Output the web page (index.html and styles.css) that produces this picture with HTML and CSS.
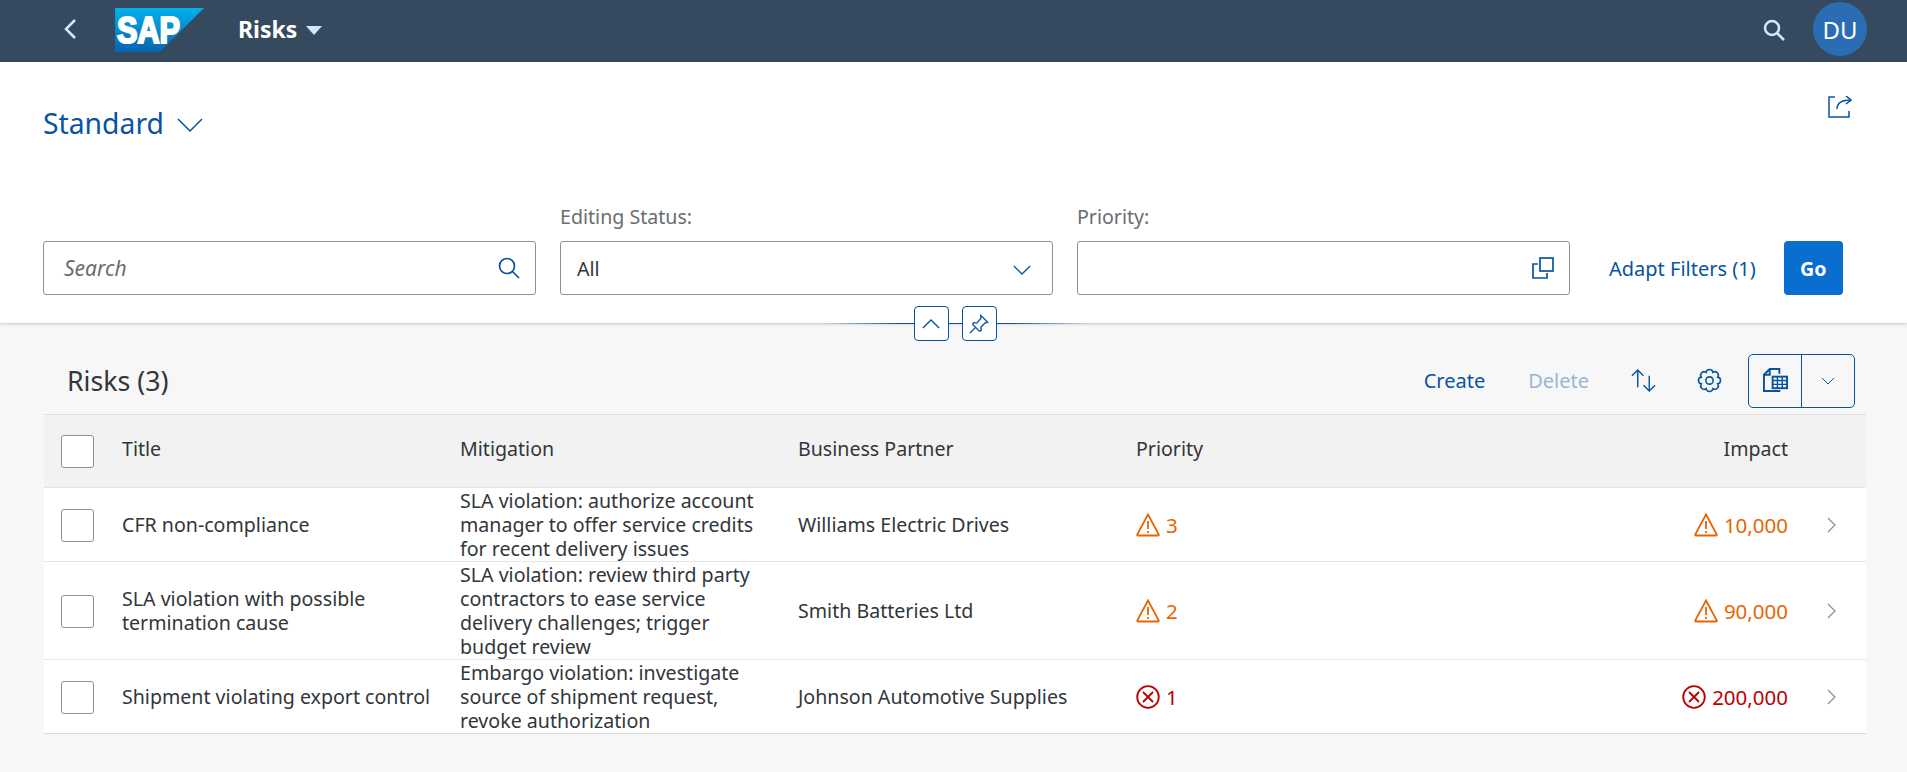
FILE: index.html
```html
<!DOCTYPE html>
<html lang="en">
<head>
    <meta charset="UTF-8">
    <meta name="viewport" content="width=device-width, initial-scale=1.0">
    <title>Risks</title>
    <link rel="stylesheet" href="styles.css">
</head>
<body>
    <header class="shell-bar">
        <svg class="back-icon" viewBox="0 0 14 22"><path d="M12 2 3 11l9 9"/></svg>
        <svg class="sap-logo" viewBox="0 0 89 44">
            <defs>
                <linearGradient id="sapBlue" x1="0" y1="0" x2="0" y2="1">
                    <stop offset="0" stop-color="#00b1eb"/>
                    <stop offset="1" stop-color="#0a63b0"/>
                </linearGradient>
            </defs>
            <polygon points="0,0 89,0 45,44 0,44" fill="url(#sapBlue)"/>
            <text x="2" y="35" class="sap-logo-text" textLength="63" lengthAdjust="spacingAndGlyphs">SAP</text>
        </svg>
        <div class="app-title">
            <span>Risks</span>
            <span class="title-caret"></span>
        </div>
        <div class="shell-actions">
            <svg class="shell-search" viewBox="0 0 22 22"><circle cx="9" cy="9" r="7"/><path d="m14 14 7 7"/></svg>
            <div class="avatar">DU</div>
        </div>
    </header>

    <section class="page-header">
        <div class="variant-row">
            <div class="variant-title">
                <span>Standard</span>
                <svg class="variant-chevron" viewBox="0 0 26 14"><path d="m1 1 12 12L25 1"/></svg>
            </div>
            <svg class="share-icon" viewBox="0 0 24 22">
                <path d="M7 1H1v20h20v-6"/>
                <path d="M9 13c0-6 5-9 14-9"/>
                <path d="m18 0 5 4-5 4"/>
            </svg>
        </div>

        <div class="filter-bar">
            <div class="filter-item">
                <div class="filter-input search-input">
                    <span class="placeholder">Search</span>
                    <svg class="input-icon" viewBox="0 0 22 22"><circle cx="9" cy="9" r="7.5"/><path d="m14.500 14.500 6.500 6.500"/></svg>
                </div>
            </div>
            <div class="filter-item">
                <label class="filter-label">Editing Status:</label>
                <div class="filter-input">
                    <span>All</span>
                    <svg class="input-chevron" viewBox="0 0 20 12"><path d="m1 1 9 9 9-9"/></svg>
                </div>
            </div>
            <div class="filter-item">
                <label class="filter-label">Priority:</label>
                <div class="filter-input">
                    <span></span>
                    <svg class="input-icon" viewBox="0 0 22 22">
                        <path d="M6 7H1v14h14v-5"/>
                        <rect x="8" y="1" width="13" height="13"/>
                    </svg>
                </div>
            </div>
            <a class="adapt-link">Adapt Filters (1)</a>
            <button class="go-button">Go</button>
        </div>

        <div class="collapse-line">
            <button class="line-button">
                <svg viewBox="0 0 20 12"><path d="m1 11 9-9 9 9"/></svg>
            </button>
            <button class="line-button">
                <svg class="pin-icon" viewBox="0 0 22 22">
                    <path d="M13 1.500 20.500 9l-3 1-4.500 4.500.5 3.500-2 1-7.500-7.500 1-2 3.500.5L13 5z"/>
                    <path d="m1 21 6-6"/>
                </svg>
            </button>
        </div>
    </section>

    <main class="content">
        <div class="table-toolbar">
            <h2 class="table-title">Risks (3)</h2>
            <div class="toolbar-actions">
                <a class="toolbar-link">Create</a>
                <a class="toolbar-link is-disabled">Delete</a>
                <svg class="toolbar-icon sort-icon" viewBox="0 0 26 24">
                    <path d="M7 19V1"/><path d="m1 7 6-6 6 6"/>
                    <path d="M19 7v16"/><path d="m13 17 6 6 6-6"/>
                </svg>
                <svg class="toolbar-icon gear-icon" viewBox="0 0 24 24">
                    <path d="M19.850 15.250A3.300 3.300 0 0 1 15.250 19.850A3.300 3.300 0 0 1 8.750 19.850A3.300 3.300 0 0 1 4.150 15.250A3.300 3.300 0 0 1 4.150 8.750A3.300 3.300 0 0 1 8.750 4.150A3.300 3.300 0 0 1 15.250 4.150A3.300 3.300 0 0 1 19.850 8.750A3.300 3.300 0 0 1 19.850 15.250Z"/>
                    <circle cx="12" cy="12" r="3.500"/>
                </svg>
                <div class="export-button">
                    <span class="export-main">
                        <svg class="export-icon" viewBox="0 0 26 26">
                            <path d="M17 6V1H7L1 7v17h17"/>
                            <path d="M7 1v6H1"/>
                            <rect class="export-sheet" x="10" y="9" width="15" height="12"/>
                            <path class="export-grid" d="M10 13h15M10 17h15M15 9v12M20 9v12"/>
                        </svg>
                    </span>
                    <span class="export-arrow">
                        <svg viewBox="0 0 14 8"><path d="m1 1 6 6 6-6"/></svg>
                    </span>
                </div>
            </div>
        </div>

        <table class="risk-table">
            <thead>
                <tr>
                    <th class="col-select"><span class="checkbox"></span></th>
                    <th><span class="head-text">Title</span></th>
                    <th><span class="head-text">Mitigation</span></th>
                    <th><span class="head-text">Business Partner</span></th>
                    <th class="col-priority"><span class="head-text">Priority</span></th>
                    <th class="col-impact"><span class="head-text">Impact</span></th>
                    <th class="col-nav"></th>
                </tr>
            </thead>
            <tbody>
                <tr>
                    <td class="col-select"><span class="checkbox"></span></td>
                    <td>CFR non-compliance</td>
                    <td>SLA violation: authorize account manager to offer service credits for recent delivery issues</td>
                    <td>Williams Electric Drives</td>
                    <td class="col-priority"><span class="status is-warning"><svg class="status-icon" viewBox="0 0 24 24"><use href="#warnIcon"/></svg>3</span></td>
                    <td class="col-impact"><span class="status is-warning"><svg class="status-icon" viewBox="0 0 24 24"><use href="#warnIcon"/></svg>10,000</span></td>
                    <td class="col-nav"><svg class="nav-chevron" viewBox="0 0 10 16"><path d="m1 1 7 7-7 7"/></svg></td>
                </tr>
                <tr>
                    <td class="col-select"><span class="checkbox"></span></td>
                    <td>SLA violation with possible termination cause</td>
                    <td>SLA violation: review third party contractors to ease service delivery challenges; trigger budget review</td>
                    <td>Smith Batteries Ltd</td>
                    <td class="col-priority"><span class="status is-warning"><svg class="status-icon" viewBox="0 0 24 24"><use href="#warnIcon"/></svg>2</span></td>
                    <td class="col-impact"><span class="status is-warning"><svg class="status-icon" viewBox="0 0 24 24"><use href="#warnIcon"/></svg>90,000</span></td>
                    <td class="col-nav"><svg class="nav-chevron" viewBox="0 0 10 16"><path d="m1 1 7 7-7 7"/></svg></td>
                </tr>
                <tr>
                    <td class="col-select"><span class="checkbox"></span></td>
                    <td>Shipment violating export control</td>
                    <td>Embargo violation: investigate source of shipment request, revoke authorization</td>
                    <td>Johnson Automotive Supplies</td>
                    <td class="col-priority"><span class="status is-error"><svg class="status-icon" viewBox="0 0 24 24"><use href="#errorIcon"/></svg>1</span></td>
                    <td class="col-impact"><span class="status is-error"><svg class="status-icon" viewBox="0 0 24 24"><use href="#errorIcon"/></svg>200,000</span></td>
                    <td class="col-nav"><svg class="nav-chevron" viewBox="0 0 10 16"><path d="m1 1 7 7-7 7"/></svg></td>
                </tr>
            </tbody>
        </table>
    </main>

    <svg class="icon-defs">
        <symbol id="warnIcon" viewBox="0 0 24 24">
            <path d="M12 1.500 22.800 21.500a.8.8 0 0 1-.7 1H1.900a.8.8 0 0 1-.7-1z"/>
            <path d="M12 8v8"/>
            <path d="M12 18v2"/>
        </symbol>
        <symbol id="errorIcon" viewBox="0 0 24 24">
            <circle cx="12" cy="12" r="10.800"/>
            <path d="m7 7 10 10M17 7 7 17"/>
        </symbol>
    </svg>
</body>
</html>
```

FILE: styles.css
```css
* {
    box-sizing: border-box;
}

body {
    margin: 0;
    height: 100vh;
    overflow: hidden;
    background: #f7f7f7;
    color: #32363a;
    font-family: 'Noto Sans', 'Open Sans', sans-serif;
    font-size: 19.6px;
}

svg {
    display: block;
    fill: none;
    stroke: currentColor;
    stroke-width: 2;
}

.icon-defs {
    position: absolute;
    width: 0;
    height: 0;
}

/* shell */
.shell-bar {
    height: 62px;
    background: #354a5f;
    color: #fff;
    display: flex;
    align-items: center;
    padding: 0 40px 0 63px;
}

.back-icon {
    width: 14px;
    height: 22px;
    color: #d1e8ff;
    stroke-width: 2.5;
    margin: -4px 38px 0 0;
}

.sap-logo {
    width: 89px;
    height: 44px;
    margin-top: -2px;
    stroke: none;
}

.sap-logo-text {
    font-family: 'Liberation Sans', sans-serif;
    font-size: 36px;
    font-weight: 700;
    fill: #fff;
    stroke: #fff;
    stroke-width: 2.2;
}

.app-title {
    display: flex;
    align-items: center;
    gap: 9px;
    margin: -5px 0 0 34px;
    font-size: 23px;
    font-weight: 700;
}

.title-caret {
    width: 0;
    height: 0;
    margin-top: 4px;
    border-left: 8px solid transparent;
    border-right: 8px solid transparent;
    border-top: 9px solid #d1e8ff;
}

.shell-actions {
    margin-left: auto;
    display: flex;
    align-items: center;
    gap: 28px;
}

.shell-search {
    width: 22px;
    height: 22px;
    color: #d1e8ff;
    margin-top: -2px;
    stroke-width: 2.5;
}

.avatar {
    width: 54px;
    height: 54px;
    margin-top: -4px;
    border-radius: 50%;
    background: #2a6db5;
    color: #fff;
    font-size: 24px;
    display: flex;
    align-items: center;
    justify-content: center;
}

/* filter header */
.page-header {
    position: relative;
    height: 261px;
    background: #fff;
    box-shadow: 0 1px 3px rgba(0, 0, 0, 0.2);
    padding: 0 51px 0 43px;
    z-index: 2;
}

.variant-row {
    display: flex;
    justify-content: space-between;
    align-items: flex-start;
    height: 143px;
    padding-top: 43px;
}

.variant-title {
    display: flex;
    align-items: center;
    gap: 13px;
    color: #0854a0;
    font-size: 28.3px;
    line-height: 36px;
}

.variant-chevron {
    width: 26px;
    height: 14px;
    margin-top: 4px;
    stroke-width: 1.5;
}

.share-icon {
    width: 24px;
    height: 22px;
    margin: -9px 4px 0 0;
    color: #0854a0;
    stroke-width: 1.5;
}

.filter-bar {
    display: flex;
    align-items: flex-end;
    gap: 24px;
}

.filter-item {
    width: 493px;
}

.filter-label {
    display: block;
    color: #6a6d70;
    line-height: 24px;
    margin-bottom: 12px;
}

.filter-input {
    height: 54px;
    border: 1px solid #89919a;
    border-radius: 3px;
    display: flex;
    align-items: center;
    justify-content: space-between;
    padding: 0 15px 0 16px;
    background: #fff;
}

.placeholder {
    color: #6a6d70;
    font-style: italic;
    font-size: 21px;
    padding-left: 4px;
}

.input-icon {
    width: 22px;
    height: 22px;
    color: #0854a0;
    stroke-width: 1.7;
}

.input-chevron {
    width: 18px;
    height: 11px;
    margin: 5px 6px 0 0;
    color: #0854a0;
    stroke-width: 1.5;
}

.adapt-link {
    color: #0854a0;
    font-size: 20px;
    line-height: 52px;
    margin-left: 15px;
}

.go-button {
    width: 59px;
    height: 54px;
    margin-left: 4px;
    border: none;
    border-radius: 4px;
    background: #0a6ed1;
    color: #fff;
    font-family: inherit;
    font-size: 19.6px;
    font-weight: 700;
}

.collapse-line {
    position: absolute;
    left: 820px;
    width: 270px;
    top: 244px;
    height: 35px;
    display: flex;
    justify-content: center;
    gap: 13px;
    background: linear-gradient(90deg, transparent, #0854a0 30%, #0854a0 70%, transparent) center / 100% 1px no-repeat;
}

.line-button {
    width: 35px;
    height: 35px;
    padding: 0;
    border: 1px solid #0854a0;
    border-radius: 4px;
    background: #fff;
    color: #0854a0;
    display: flex;
    align-items: center;
    justify-content: center;
}

.line-button svg {
    width: 18px;
    height: 11px;
    stroke-width: 1.5;
}

.line-button .pin-icon {
    width: 20px;
    height: 20px;
}

/* table */
.content {
    padding: 0 41px 0 44px;
}

.table-toolbar {
    height: 91px;
    display: flex;
    align-items: center;
    justify-content: space-between;
    padding: 31px 11px 7px 23px;
}

.table-title {
    margin: 0;
    font-size: 26.7px;
    font-weight: 400;
}

.toolbar-actions {
    display: flex;
    align-items: center;
}

.toolbar-link {
    color: #0854a0;
    font-size: 20px;
    margin-right: 43px;
}

.toolbar-link.is-disabled {
    opacity: 0.4;
    margin-right: 42px;
}

.toolbar-icon {
    width: 25px;
    height: 25px;
    color: #0854a0;
    stroke-width: 1.5;
}

.sort-icon {
    margin-right: 41px;
}

.gear-icon {
    margin-right: 26px;
}

.export-button {
    width: 107px;
    height: 54px;
    border: 1px solid #0854a0;
    border-radius: 5px;
    display: flex;
    color: #0854a0;
}

.export-main {
    width: 53px;
    border-right: 1px solid #0854a0;
    display: flex;
    align-items: center;
    justify-content: center;
}

.export-icon {
    width: 25px;
    height: 25px;
}

.export-sheet {
    fill: #f7f7f7;
}

.export-grid {
    stroke-width: 1.5;
}

.export-arrow {
    flex: 1;
    display: flex;
    align-items: center;
    justify-content: center;
}

.export-arrow svg {
    width: 14px;
    height: 8px;
    stroke-width: 1;
}

.risk-table {
    width: 1822px;
    table-layout: fixed;
    border-collapse: collapse;
    line-height: 24px;
}

.risk-table th,
.risk-table td {
    padding: 0 26px 0 0;
    text-align: left;
    font-weight: 400;
    vertical-align: middle;
}

.risk-table thead tr {
    height: 73px;
    background: #f2f2f2;
    border-top: 1px solid #e0e0e0;
    border-bottom: 1px solid #e5e5e5;
}

.head-text {
    display: block;
    margin-bottom: 4px;
}

.risk-table tbody tr {
    background: #fff;
    border-bottom: 1px solid #e5e5e5;
}

.risk-table tbody td {
    padding-top: 1px;
}

.risk-table tbody tr:last-child {
    border-bottom-color: #d9d9d9;
}

.col-select {
    width: 78px;
}

.risk-table th:nth-child(2),
.risk-table th:nth-child(3),
.risk-table th:nth-child(4) {
    width: 338px;
}

.risk-table th.col-priority {
    width: 240px;
}

.risk-table .col-impact {
    padding-right: 0;
    text-align: right;
}

.col-nav {
    width: 78px;
}

.checkbox {
    display: block;
    width: 33px;
    height: 33px;
    margin-left: 17px;
    border: 1px solid #89919a;
    border-radius: 3px;
    background: #fff;
}

.status {
    display: inline-flex;
    align-items: center;
    gap: 6px;
    font-size: 20.5px;
    vertical-align: top;
}

.status.is-warning {
    color: #e76500;
}

.status.is-error {
    color: #bb0000;
}

.status-icon {
    width: 24px;
    height: 24px;
    stroke-width: 1.8;
}

.nav-chevron {
    width: 10px;
    height: 16px;
    margin-left: 39px;
    color: #8c8c8c;
    stroke-width: 1.2;
}
```
